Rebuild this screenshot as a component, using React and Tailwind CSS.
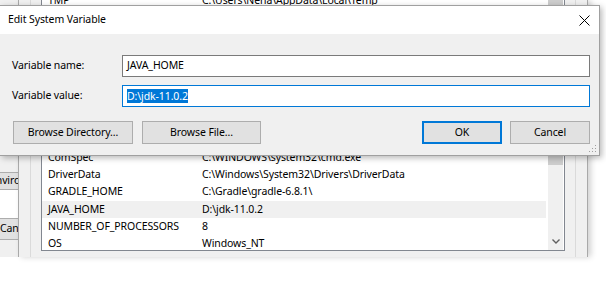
import React from 'react';

const systemVars = [
  ['ComSpec', 'C:\\WINDOWS\\system32\\cmd.exe'],
  ['DriverData', 'C:\\Windows\\System32\\Drivers\\DriverData'],
  ['GRADLE_HOME', 'C:\\Gradle\\gradle-6.8.1\\'],
  ['JAVA_HOME', 'D:\\jdk-11.0.2'],
  ['NUMBER_OF_PROCESSORS', '8'],
  ['OS', 'Windows_NT'],
];

function WinButton({ children, primary, className = '' }) {
  return (
    <div
      className={
        'h-[23px] flex items-center justify-center bg-[#e1e1e1] ' +
        (primary ? 'border-2 border-[#0078d7] ' : 'border border-[#adadad] ') +
        className
      }
    >
      {children}
    </div>
  );
}

function ListRow({ name, value, selected }) {
  return (
    <div className={'h-[17.33px] flex items-center pl-[6px] whitespace-nowrap ' + (selected ? 'bg-[#f0f0f0]' : '')}>
      <span className="w-[154px] shrink-0">{name}</span>
      <span>{value}</span>
    </div>
  );
}

export default function App() {
  return (
    <div className="relative w-[606px] h-[288px] bg-white overflow-hidden font-['Noto_Sans',sans-serif] text-[10.5px] tracking-[-0.1px] text-black">
      {/* windows behind the dialog */}
      <div className="flex h-[257px]">
        {/* System Properties remnant */}
        <div className="w-[18px] shrink-0 bg-[#f0f0f0] flex flex-col overflow-hidden">
          <div className="h-[172px]" />
          <div className="h-[18px] bg-[#e1e1e1] border-y border-[#adadad] flex items-center whitespace-nowrap -ml-[10px] w-[80px] overflow-hidden">
            Environment
          </div>
          <div className="h-[28px] bg-white" />
          <div className="h-[22px] bg-[#e1e1e1] border-y border-[#adadad] flex items-center whitespace-nowrap w-[18px] overflow-hidden">
            Cancel
          </div>
        </div>

        {/* Environment Variables window */}
        <div className="w-[570px] shrink-0 bg-[#f0f0f0] border-x border-[#a9a9a9] shadow-[3px_0_6px_rgba(0,0,0,0.18)] flex">
          <div className="flex-1 ml-[11px] mr-[11px] border-x border-[#dadada] px-[10px] flex flex-col">
            {/* user variables list (bottom edge) */}
            <div className="h-[5px] bg-white border-x border-[#828790] flex overflow-hidden">
              <div className="flex-1 -mt-[8px]">
                <ListRow name="TMP" value="C:\Users\Neha\AppData\Local\Temp" />
              </div>
              <div className="w-[15px] bg-[#cdcdcd] mr-[1px]" />
            </div>
            <div className="h-[144px]" />
            {/* system variables list */}
            <div className="h-[102px] bg-white border border-[#828790] flex">
              <div className="flex-1 overflow-hidden pr-[2px]">
                <div className="-mt-[1px]">
                  {systemVars.map(([n, v]) => (
                    <ListRow key={n} name={n} value={v} selected={n === 'JAVA_HOME'} />
                  ))}
                </div>
              </div>
              <div className="w-[15px] mr-[1px] bg-[#f0f0f0] flex flex-col">
                <div className="h-[15px] bg-[#cdcdcd]" />
                <div className="flex-1" />
                <div className="h-[17px] flex items-center justify-center">
                  <svg width="8" height="5" viewBox="0 0 8 5">
                    <path d="M0.5 0.5 L4 4 L7.5 0.5" fill="none" stroke="#606060" strokeWidth="1.4" />
                  </svg>
                </div>
              </div>
            </div>
          </div>
        </div>
      </div>

      {/* Edit System Variable dialog */}
      <div className="absolute left-0 top-[5px] w-[600px] h-[151px] flex flex-col border-t border-r border-b border-[#a0a0a0] shadow-[2px_2px_6px_rgba(0,0,0,0.28)]">
        <div className="h-[28px] shrink-0 bg-white flex items-center justify-between pl-[8px] pr-[9px]">
          <span className="text-[10.5px]">Edit System Variable</span>
          <svg width="11" height="11" viewBox="0 0 11 11">
            <path d="M0.5 0.5 L10.5 10.5 M10.5 0.5 L0.5 10.5" stroke="#000" strokeWidth="1" fill="none" />
          </svg>
        </div>
        <div className="relative flex-1 bg-[#f0f0f0] pt-[21px] pr-[9px] flex flex-col">
          <div className="flex items-center h-[22px]">
            <span className="w-[122px] shrink-0 pl-[12px]">Variable name:</span>
            <div className="flex-1 h-full bg-white border border-[#7a7a7a] flex items-center pl-[4px]">JAVA_HOME</div>
          </div>
          <div className="flex items-center h-[22px] mt-[8px]">
            <span className="w-[122px] shrink-0 pl-[12px]">Variable value:</span>
            <div className="flex-1 h-full bg-white border border-[#0078d7] flex items-center pl-[4px]">
              <span className="bg-[#0078d7] text-white leading-[14px]">D:\jdk-11.0.2</span>
            </div>
          </div>
          <div className="flex mt-[14px] pl-[13px]">
            <WinButton className="w-[120px]">Browse Directory...</WinButton>
            <WinButton className="w-[119px] ml-[9px]">Browse File...</WinButton>
            <WinButton primary className="w-[80px] ml-auto">OK</WinButton>
            <WinButton className="w-[80px] ml-[8px]">Cancel</WinButton>
          </div>
          {/* resize grip */}
          <svg className="absolute right-[2px] bottom-[2px]" width="8" height="8" viewBox="0 0 8 8">
            <rect x="6" y="0" width="1" height="1" fill="#a0a0a0" />
            <rect x="3" y="3" width="1" height="1" fill="#a0a0a0" />
            <rect x="6" y="3" width="1" height="1" fill="#a0a0a0" />
            <rect x="0" y="6" width="1" height="1" fill="#a0a0a0" />
            <rect x="3" y="6" width="1" height="1" fill="#a0a0a0" />
            <rect x="6" y="6" width="1" height="1" fill="#a0a0a0" />
          </svg>
        </div>
      </div>
    </div>
  );
}
